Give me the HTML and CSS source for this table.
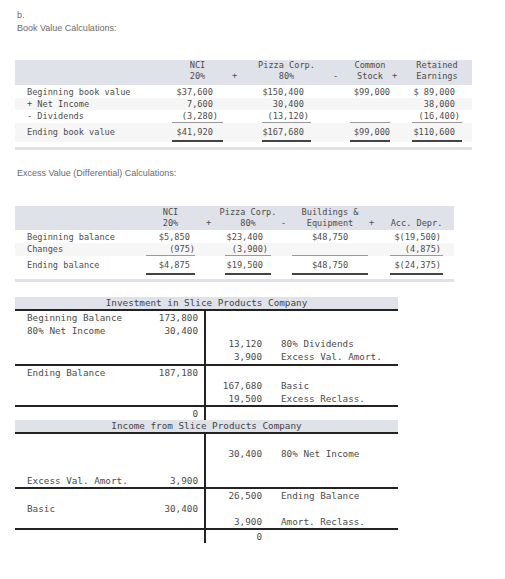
FILE: index.html
```html
<!DOCTYPE html>
<html>
<head>
<meta charset="utf-8">
<link rel="stylesheet" href="styles.css">
</head>
<body>
<div class="title first">b.<br>Book Value Calculations:</div>

<table class="calc t1">
<colgroup><col class="w1"><col class="w2"><col class="w3"><col class="w4"><col class="w5"><col class="w6"><col class="w7"><col class="w8"><col class="w9"></colgroup>
<tr class="hr">
<td></td>
<td><div class="h">NCI<br>20%</div></td>
<td class="op op1"><br>+</td>
<td><div class="h">Pizza Corp.<br>80%</div></td>
<td class="op op2"><br>-</td>
<td><div class="h">Common<br>Stock</div></td>
<td class="op op3"><br>+</td>
<td><div class="h">Retained<br>Earnings</div></td>
<td></td>
</tr>
<tr class="first-row">
<td class="lab">Beginning book value</td><td class="n p5">$37,600 </td><td></td><td class="n p2">$150,400 </td><td></td><td class="n">$99,000</td><td></td><td class="n p2">$ 89,000 </td><td></td>
</tr>
<tr class="alt">
<td class="lab">+ Net Income</td><td class="n p5">7,600 </td><td></td><td class="n p2">30,400 </td><td></td><td class="n"></td><td></td><td class="n p2">38,000 </td><td></td>
</tr>
<tr>
<td class="lab">- Dividends</td><td class="n p5 u">(3,280)</td><td></td><td class="n p2 u">(13,120)</td><td></td><td class="n u"></td><td></td><td class="n p2 u">(16,400)</td><td></td>
</tr>
<tr class="alt last">
<td class="lab">Ending book value</td><td class="n p5 U">$41,920 </td><td></td><td class="n p2 U">$167,680 </td><td></td><td class="n U">$99,000</td><td></td><td class="n p2 U">$110,600 </td><td></td>
</tr>
</table>
<div class="bar bar1"></div>

<div class="title second">Excess Value (Differential) Calculations:</div>

<table class="calc t2">
<colgroup><col class="w1"><col class="w2"><col class="w3"><col class="w4"><col class="w5"><col class="w6"><col class="w7"><col class="w8"><col class="w9"></colgroup>
<tr class="hr">
<td></td>
<td><div class="h">NCI<br>20%</div></td>
<td class="op op1"><br>+</td>
<td><div class="h">Pizza Corp.<br>80%</div></td>
<td class="op op2"><br>-</td>
<td><div class="h">Buildings &amp;<br>Equipment</div></td>
<td class="op op3"><br>+</td>
<td><div class="h"><br>Acc. Depr.</div></td>
<td></td>
</tr>
<tr class="first-row">
<td class="lab">Beginning balance</td><td class="n">$5,850 </td><td></td><td class="n p3">$23,400 </td><td></td><td class="c">$48,750</td><td></td><td class="n p2">$(19,500)</td><td></td>
</tr>
<tr class="alt">
<td class="lab">Changes</td><td class="n u">(975)</td><td></td><td class="n p3 u">(3,900)</td><td></td><td class="c u"></td><td></td><td class="n p2 u">(4,875)</td><td></td>
</tr>
<tr class="last">
<td class="lab">Ending balance</td><td class="n U">$4,875 </td><td></td><td class="n p3 U">$19,500 </td><td></td><td class="c U">$48,750</td><td></td><td class="n p2 U">$(24,375)</td><td></td>
</tr>
</table>
<div class="bar bar2"></div>

<table class="t">
<colgroup><col class="tl"><col class="ta"><col class="tb"><col class="tr"></colgroup>
<tr class="hd"><td colspan="4">Investment in Slice Products Company</td></tr>
<tr><td class="l">Beginning Balance</td><td class="a">173,800</td><td class="b"></td><td class="r"></td></tr>
<tr><td class="l">80% Net Income</td><td class="a">30,400</td><td class="b"></td><td class="r"></td></tr>
<tr><td class="l"></td><td class="a"></td><td class="b">13,120</td><td class="r">80% Dividends</td></tr>
<tr class="end"><td class="l"></td><td class="a"></td><td class="b">3,900</td><td class="r">Excess Val. Amort.</td></tr>
<tr><td class="l">Ending Balance</td><td class="a">187,180</td><td class="b"></td><td class="r"></td></tr>
<tr><td class="l"></td><td class="a"></td><td class="b">167,680</td><td class="r">Basic</td></tr>
<tr class="end"><td class="l"></td><td class="a"></td><td class="b">19,500</td><td class="r">Excess Reclass.</td></tr>
<tr><td class="l"></td><td class="a">0</td><td class="b"></td><td class="r"></td></tr>
<tr class="hd"><td colspan="4">Income from Slice Products Company</td></tr>
<tr><td class="l"></td><td class="a"></td><td class="b"></td><td class="r"></td></tr>
<tr><td class="l"></td><td class="a"></td><td class="b">30,400</td><td class="r">80% Net Income</td></tr>
<tr><td class="l"></td><td class="a"></td><td class="b"></td><td class="r"></td></tr>
<tr class="end"><td class="l">Excess Val. Amort.</td><td class="a">3,900</td><td class="b"></td><td class="r"></td></tr>
<tr><td class="l"></td><td class="a"></td><td class="b">26,500</td><td class="r">Ending Balance</td></tr>
<tr><td class="l">Basic</td><td class="a">30,400</td><td class="b"></td><td class="r"></td></tr>
<tr class="end"><td class="l"></td><td class="a"></td><td class="b">3,900</td><td class="r">Amort. Reclass.</td></tr>
<tr><td class="l"></td><td class="a"></td><td class="b">0</td><td class="r"></td></tr>
</table>
</body>
</html>
```
FILE: styles.css
```css
html, body {
  margin: 0;
  padding: 0;
  background: #fff;
}
body {
  width: 505px;
}
.title {
  font-family: "Liberation Sans", Arial, sans-serif;
  font-size: 9px;
  line-height: 13px;
  color: #6a6a6a;
  padding-left: 17px;
}
.first {
  padding-top: 9px;
}
.second {
  margin-top: 17px;
}
table {
  border-collapse: separate;
  border-spacing: 0;
  table-layout: fixed;
  margin-left: 15px;
}
.calc {
  font-family: "DejaVu Sans Mono", monospace;
  font-size: 8.6px;
  color: #4d4d4d;
}
.calc td {
  padding: 0;
  line-height: 12px;
  white-space: pre;
  vertical-align: top;
  overflow: visible;
}
.calc tr.alt td {
  background: #f6f6f6;
}
.calc .hr td {
  background: #dfe2e9;
  line-height: 11px;
  text-align: center;
}
.calc .hr td.op {
  text-align: left;
}
.calc .h {
  margin: 0 -15px;
  text-align: center;
}
.t1 {
  margin-top: 25px;
  width: 457px;
}
.t1 .hr td {
  padding-bottom: 3px;
}
.t1 tr.first-row td {
  padding-top: 1px;
}
.t1 .w1 { width: 157px; }
.t1 .w2 { width: 51px; }
.t1 .w3 { width: 39px; }
.t1 .w4 { width: 49px; }
.t1 .w5 { width: 39px; }
.t1 .w6 { width: 40px; }
.t1 .w7 { width: 22px; }
.t1 .w8 { width: 50px; }
.t1 .w9 { width: 10px; }
.t1 .op1 { padding-left: 9px; }
.t1 .op2 { padding-left: 22px; }
.t1 .op3 { padding-left: 2px; }

.t2 {
  margin-top: 26px;
  width: 439px;
}
.t2 .hr td {
  padding-top: 1px;
  padding-bottom: 1px;
}
.t2 tr.first-row td {
  padding-top: 1px;
}
.t2 .w1 { width: 131px; }
.t2 .w2 { width: 49px; }
.t2 .w3 { width: 30px; }
.t2 .w4 { width: 46px; }
.t2 .w5 { width: 21px; }
.t2 .w6 { width: 76px; }
.t2 .w7 { width: 22px; }
.t2 .w8 { width: 53px; }
.t2 .w9 { width: 11px; }
.t2 .op1 { padding-left: 11px; }
.t2 .op2 { padding-left: 10px; }
.t2 .op3 { padding-left: 1px; }

.calc td.lab { padding-left: 12px; }
.calc td.n { text-align: right; }
.calc td.c { text-align: center; }
.calc td.p5 { padding-right: 5px; }
.calc td.p3 { padding-right: 3px; }
.calc td.p2 { padding-right: 2px; }
.calc td.u { border-bottom: 1px solid #9a9a9a; }
.calc td.U { border-bottom: 2px solid #444; }
.t1 tr.last td {
  padding-top: 3px;
  padding-bottom: 2px;
}
.t2 tr.last td {
  padding-top: 3px;
  padding-bottom: 2px;
}
.bar {
  margin-left: 15px;
  height: 3px;
  background: #dfe2e9;
}
.bar1 {
  width: 457px;
  margin-top: 5px;
}
.bar2 {
  width: 439px;
  margin-top: 4px;
}

.t {
  font-family: "DejaVu Sans Mono", monospace;
  font-size: 9.3px;
  color: #4d4d4d;
  margin-top: 15px;
  width: 383px;
}
.t .tl { width: 135px; }
.t .ta { width: 56px; }
.t .tb { width: 64px; }
.t .tr { width: 128px; }
.t td {
  padding: 0;
  height: 13.15px;
  line-height: 13.15px;
  white-space: pre;
  vertical-align: top;
}
.t .hd td {
  background: #dfe2e9;
  height: 12px;
  line-height: 12px;
  text-align: center;
  border-bottom: 2px solid #222;
  color: #444;
}
.t td.l { padding-left: 12px; }
.t td.a {
  text-align: right;
  padding-right: 6px;
  border-right: 2px solid #222;
}
.t td.b {
  text-align: right;
  padding-right: 8px;
}
.t td.r { padding-left: 11px; }
.t tr.end td { border-bottom: 2px solid #222; }
```
